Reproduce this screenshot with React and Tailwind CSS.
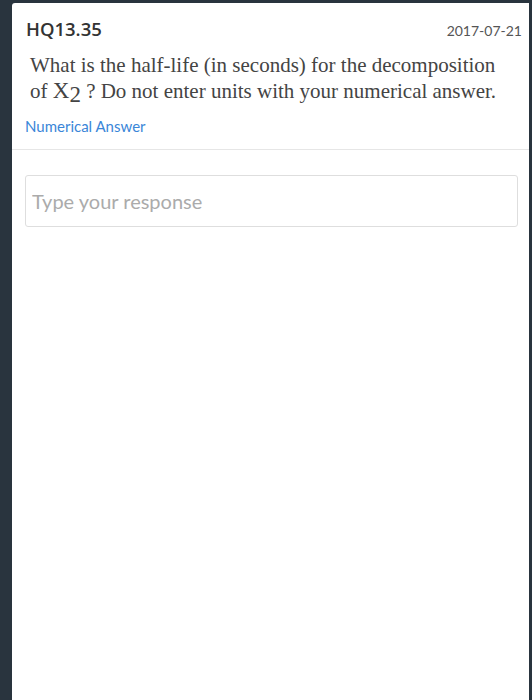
const Question = () => {
  return (
    <div className="px-[15px] pt-[14px]">
      <div className="flex items-start justify-between">
        <h1 className="text-[18.5px] font-semibold text-[#333] font-['Open_Sans',sans-serif] leading-[24px] ml-[-1px]">
          HQ13.35
        </h1>
        <span className="text-[14px] text-[#555] font-['Lato',sans-serif] mt-[3px] mr-[-8px]">
          2017-07-21
        </span>
      </div>
      <p className="mt-[11px] pl-[3px] text-[21px] leading-[26px] text-[#444] font-['Liberation_Serif',serif]">
        What is the half-life (in seconds) for the decomposition of{' '}
        <span className="text-[23px] leading-none">
          X<span className="relative top-[4px]">2</span>
        </span>{' '}
        ? Do not enter units with your numerical answer.
      </p>
    </div>
  );
};

const App = () => {
  return (
    <div className="min-h-[700px] bg-[#29343e] pl-[12px] pt-[3px] pr-[3px]">
      <div className="min-h-[697px] bg-white rounded-tl-[3px]">
        <Question />
        <div className="px-[13px] pt-[11px] pb-[11px] text-[15px] text-[#3a86d8] font-['Lato',sans-serif]">
          Numerical Answer
        </div>
        <div className="border-t border-[#e6e6e6]"></div>
        <div className="px-[13px] pt-[25px] pr-[11px]">
          <input
            className="w-full h-[52px] border border-[#dedede] rounded-[3px] px-[6px] text-[20px] font-['Lato',sans-serif] placeholder:text-[#ababab] outline-none"
            placeholder="Type your response"
          />
        </div>
      </div>
    </div>
  );
};

export default App;
